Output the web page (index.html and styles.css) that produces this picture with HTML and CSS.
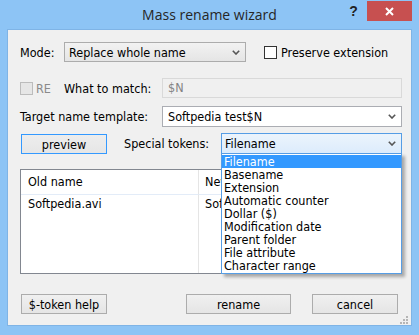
FILE: index.html
```html
<!DOCTYPE html>
<html lang="en">
<head>
    <meta charset="UTF-8">
    <title>Mass rename wizard</title>
    <link rel="stylesheet" href="styles.css">
</head>
<body>
    <div class="window">
        <div class="titlebar">
            <span class="title">Mass rename wizard</span>
            <span class="help">?</span>
            <span class="close">
                <svg width="9" height="9" viewBox="0 0 9 9"><path d="M1 1 L8 8 M8 1 L1 8" stroke="#fff" stroke-width="2"/></svg>
            </span>
        </div>

        <div class="client">
            <div class="row row-mode">
                <span class="label-mode">Mode:</span>
                <div class="select">
                    <span>Replace whole name</span>
                    <svg class="chevron" width="8" height="5" viewBox="0 0 8 5"><path d="M0.8 0.8 L4 4 L7.2 0.8" fill="none" stroke="#555" stroke-width="1.6"/></svg>
                </div>
                <label class="preserve"><span class="check"></span>Preserve extension</label>
            </div>

            <div class="row row-match">
                <label class="re"><span class="check check-disabled"></span>RE</label>
                <span class="label-match">What to match:</span>
                <div class="input-disabled">$N</div>
            </div>

            <div class="row row-target">
                <span class="label-target">Target name template:</span>
                <div class="combo">
                    <span>Softpedia test$N</span>
                    <svg class="chevron" width="8" height="5" viewBox="0 0 8 5"><path d="M0.8 0.8 L4 4 L7.2 0.8" fill="none" stroke="#555" stroke-width="1.6"/></svg>
                </div>
            </div>

            <div class="row row-tokens">
                <button class="btn btn-default preview-btn">preview</button>
                <span class="label-tokens">Special tokens:</span>
                <div class="combo combo-open">
                    <span>Filename</span>
                    <svg class="chevron" width="8" height="5" viewBox="0 0 8 5"><path d="M0.8 0.8 L4 4 L7.2 0.8" fill="none" stroke="#555" stroke-width="1.6"/></svg>
                    <ul class="dropdown">
                        <li class="selected">Filename</li>
                        <li>Basename</li>
                        <li>Extension</li>
                        <li>Automatic counter</li>
                        <li>Dollar ($)</li>
                        <li>Modification date</li>
                        <li>Parent folder</li>
                        <li>File attribute</li>
                        <li>Character range</li>
                    </ul>
                </div>
            </div>

            <div class="list">
                <div class="cell head first">Old name</div>
                <div class="cell head">New name</div>
                <div class="cell first">Softpedia.avi</div>
                <div class="cell">Softpedia test1.avi</div>
                <div class="cell first filler"></div>
                <div class="cell filler"></div>
            </div>

            <div class="row row-buttons">
                <button class="btn help-btn">$-token help</button>
                <button class="btn rename-btn">rename</button>
                <button class="btn cancel-btn">cancel</button>
            </div>

            <svg class="grip" width="9" height="9" viewBox="0 0 9 9">
                <rect x="6" y="0" width="2" height="2" fill="#b5b5b5"/>
                <rect x="3" y="3" width="2" height="2" fill="#b5b5b5"/>
                <rect x="6" y="3" width="2" height="2" fill="#b5b5b5"/>
                <rect x="0" y="6" width="2" height="2" fill="#b5b5b5"/>
                <rect x="3" y="6" width="2" height="2" fill="#b5b5b5"/>
                <rect x="6" y="6" width="2" height="2" fill="#b5b5b5"/>
            </svg>
        </div>
    </div>
</body>
</html>
```

FILE: styles.css
```css
body {
    margin: 0;
    padding: 0;
    font-family: "DejaVu Sans Condensed", "DejaVu Sans", sans-serif;
    font-size: 12.5px;
    color: #000;
}

.window {
    width: 419px;
    height: 335px;
    background-color: #8dc4f5;
    display: flex;
    flex-direction: column;
}

/* title bar */
.titlebar {
    height: 30px;
    display: flex;
    align-items: flex-start;
    flex-shrink: 0;
}

.title {
    flex: 1;
    text-align: center;
    padding-left: 79px;
    line-height: 30px;
    font-family: "Open Sans", sans-serif;
    font-size: 14px;
    color: #262626;
}

.help {
    width: 27px;
    text-align: center;
    line-height: 22px;
    font-family: "Liberation Sans", sans-serif;
    font-weight: bold;
    font-size: 14px;
    color: #222;
}

.close {
    width: 45px;
    height: 20px;
    margin-top: 1px;
    margin-right: 7px;
    background-color: #c75050;
    display: flex;
    align-items: center;
    justify-content: center;
}

/* dialog body */
.client {
    flex: 1;
    margin: 0 8px 10px 8px;
    padding: 12px 9px 0 12px;
    background-color: #f0f0f0;
    position: relative;
    box-shadow: 0 0 0 1px #7fb4e6;
}

.row {
    display: flex;
    align-items: center;
}

.row-mode {
    height: 20px;
}

.label-mode {
    width: 44px;
}

.select, .combo {
    box-sizing: border-box;
    display: flex;
    align-items: center;
    justify-content: space-between;
    padding: 0 5px 0 4px;
}

.select {
    width: 182px;
    height: 20px;
    border: 1px solid #acacac;
    background: linear-gradient(#f2f2f2, #e5e5e5);
}

.chevron {
    display: block;
}

.check {
    width: 13px;
    height: 13px;
    box-sizing: border-box;
    border: 1px solid #333;
    background-color: #fff;
}

.preserve {
    margin-left: 18px;
    display: flex;
    align-items: center;
    gap: 4px;
}

.row-match {
    margin-top: 16px;
    height: 20px;
}

.re {
    width: 44px;
    display: flex;
    align-items: center;
    gap: 3px;
    color: #8a8a8a;
}

.check-disabled {
    border-color: #bcbcbc;
    background-color: #e6e6e6;
}

.label-match {
    width: 98px;
}

.input-disabled {
    width: 240px;
    height: 20px;
    box-sizing: border-box;
    border: 1px solid #d9d9d9;
    background-color: #f0f0f0;
    color: #838383;
    padding-left: 5px;
    line-height: 18px;
}

.row-target {
    margin-top: 8px;
    height: 21px;
}

.label-target {
    width: 142px;
}

.combo {
    width: 240px;
    height: 21px;
    border: 1px solid #abadb3;
    background-color: #fff;
    padding-left: 5px;
}

.row-tokens {
    margin-top: 6px;
    height: 21px;
    align-items: flex-end;
}

.btn {
    height: 20px;
    box-sizing: border-box;
    border: 1px solid #acacac;
    background: linear-gradient(#f0f0f0, #e5e5e5);
    font-family: inherit;
    font-size: 12.5px;
    color: #000;
    padding: 0;
}

.btn-default {
    border-color: #3399ff;
    background: linear-gradient(#ededed, #e6e6e6);
}

.preview-btn {
    width: 86px;
    margin-left: 1px;
}

.label-tokens {
    width: 97px;
    margin-left: 17px;
    align-self: center;
}

.combo-open {
    width: 181px;
    position: relative;
    border-color: #569de5;
    background: linear-gradient(#ecf4fc, #dcecfc);
    padding-left: 3px;
}

.dropdown {
    position: absolute;
    top: 100%;
    left: -1px;
    width: 181px;
    box-sizing: border-box;
    margin: 0;
    padding: 1px 0;
    list-style: none;
    border: 1px solid #569de5;
    background-color: #fff;
    box-shadow: 3px 3px 3px rgba(0, 0, 0, 0.3);
    z-index: 10;
}

.dropdown li {
    height: 13px;
    line-height: 13px;
    padding-left: 2px;
}

.dropdown .selected {
    background-color: #3399ff;
    color: #fff;
}

/* file list */
.list {
    margin-top: 15px;
    height: 105px;
    box-sizing: border-box;
    border: 1px solid #828790;
    background-color: #fff;
    display: grid;
    grid-template-columns: 178px 1fr;
    grid-template-rows: 25px 18px 1fr;
}

.cell {
    padding-left: 6px;
    line-height: 18px;
    white-space: nowrap;
    overflow: hidden;
}

.cell.first {
    border-right: 1px solid #e5e5e5;
    padding-left: 7px;
}

.cell.head {
    box-sizing: border-box;
    border-bottom: 1px solid #e3ecf8;
    line-height: 24px;
}

.row-buttons {
    margin-top: 20px;
    height: 20px;
}

.help-btn {
    width: 86px;
    margin-left: 1px;
}

.rename-btn {
    width: 105px;
    margin-left: 79px;
}

.cancel-btn {
    width: 86px;
    margin-left: 21px;
}

.grip {
    position: absolute;
    right: 2px;
    bottom: 0;
}
```
